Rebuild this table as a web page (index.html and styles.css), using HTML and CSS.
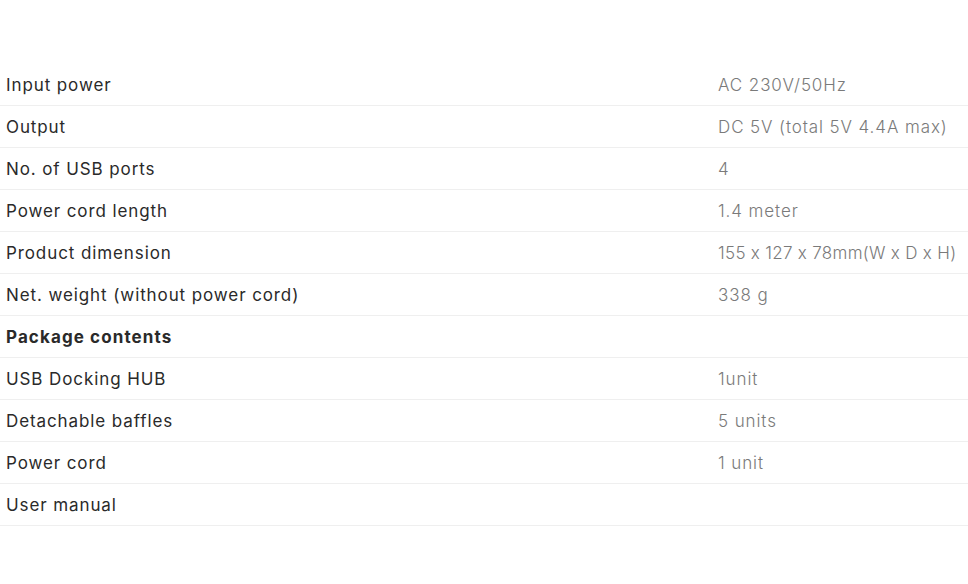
FILE: index.html
```html
<!DOCTYPE html>
<html>
<head>
<meta charset="utf-8">
<link rel="stylesheet" href="styles.css">
</head>
<body>
<div class="specs">
  <div class="row"><div class="label">Input power</div><div class="value">AC 230V/50Hz</div></div>
  <div class="row"><div class="label">Output</div><div class="value">DC 5V (total 5V 4.4A max)</div></div>
  <div class="row"><div class="label">No. of USB ports</div><div class="value">4</div></div>
  <div class="row"><div class="label">Power cord length</div><div class="value">1.4 meter</div></div>
  <div class="row"><div class="label">Product dimension</div><div class="value tight">155 x 127 x 78mm(W x D x H)</div></div>
  <div class="row"><div class="label">Net. weight (without power cord)</div><div class="value">338 g</div></div>
  <div class="row"><div class="label heading">Package contents</div><div class="value"></div></div>
  <div class="row"><div class="label">USB Docking HUB</div><div class="value">1unit</div></div>
  <div class="row"><div class="label">Detachable baffles</div><div class="value">5 units</div></div>
  <div class="row"><div class="label">Power cord</div><div class="value">1 unit</div></div>
  <div class="row"><div class="label">User manual</div><div class="value"></div></div>
</div>
</body>
</html>
```
FILE: styles.css
```css
html, body {
  margin: 0;
  padding: 0;
  background: #fff;
}
body {
  font-family: "Inter", "Noto Sans", sans-serif;
  font-feature-settings: "calt" 0;
}
.specs {
  padding-top: 64px;
}
.row {
  display: grid;
  grid-template-columns: 712px 1fr;
  height: 42px;
  box-sizing: border-box;
  border-bottom: 1px solid #efefef;
  align-items: center;
}
.label {
  padding-left: 6px;
  font-size: 17px;
  letter-spacing: 0.9px;
  color: #2a2a2a;
  white-space: nowrap;
}
.label.heading {
  font-weight: 700;
  letter-spacing: 1.1px;
}
.value {
  padding-left: 6px;
  font-size: 17px;
  font-weight: 300;
  letter-spacing: 0.9px;
  color: #7a7a7a;
  white-space: nowrap;
  overflow: hidden;
}
.value.tight {
  letter-spacing: 0.3px;
}
```
